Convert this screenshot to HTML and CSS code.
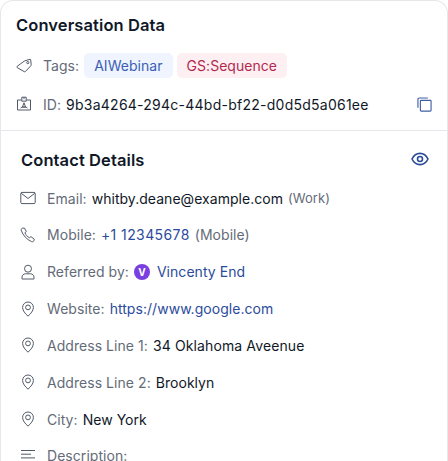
FILE: index.html
```html
<!DOCTYPE html>
<html lang="en">
<head>
<meta charset="utf-8">
<title>Conversation Data</title>
<link rel="stylesheet" href="styles.css">
</head>
<body>
<main class="panel">
  <section class="conv">
    <h2 class="conv-title">Conversation Data</h2>
    <div class="conv-row tags-row">
      <svg class="icon" viewBox="0 0 16 16"><path d="M8.700 2.900 14 1.300c.4-.1.700.2.700.5l.5 5c0 .4-.1.700-.3.900l-5.500 5.800c-.4.400-1 .4-1.400 0L1.200 9.600c-.4-.4-.4-.9 0-1.300l6.800-5c.2-.2.400-.3.700-.4Z"/><circle cx="11.800" cy="4.600" r="1.100"/></svg>
      <span class="label">Tags:</span>
      <span class="tag tag-blue">AIWebinar</span>
      <span class="tag tag-red">GS:Sequence</span>
    </div>
    <div class="conv-row id-row">
      <svg class="icon" viewBox="0 0 16 16"><path d="M5.600 4H1.500v10h13V4h-4.100"/><path d="M5.800 1.200h4.400v4H5.800zM8 1.200v2M4.700 12.300l1-1.200h4.600l1 1.200M8 6.800l1.600 4.300H6.400z"/></svg>
      <span class="label">ID:</span>
      <span class="value id-value">9b3a4264-294c-44bd-bf22-d0d5d5a061ee</span>
      <svg class="copy" viewBox="0 0 16 16"><path d="M1 11.500V2.400C1 1.600 1.600 1 2.400 1H11.500"/><rect x="3.600" y="3.600" width="11.400" height="11.400" rx=".8"/></svg>
    </div>
  </section>
  <section class="contact">
    <header class="contact-head">
      <h2 class="contact-title">Contact Details</h2>
      <svg class="eye" viewBox="0 0 18 14"><path d="M1 7c1.700-3.600 4.500-5.600 8-5.600s6.300 2 8 5.600c-1.700 3.600-4.500 5.600-8 5.600S2.700 10.600 1 7Z"/><circle cx="9" cy="7" r="2.500"/></svg>
    </header>
    <ul class="rows">
      <li class="row">
        <svg class="icon" viewBox="0 0 16 16"><rect x=".8" y="2.400" width="14.400" height="11.200" rx="1.200"/><path d="m1.200 3.200 6.800 5.300 6.800-5.300"/></svg>
        <span class="label">Email:</span><span class="value">whitby.deane@example.com</span><span class="muted">(Work)</span>
      </li>
      <li class="row">
        <svg class="icon" viewBox="0 0 16 16"><path d="M2.300 1.200 4.400 1l2 3.500-1.500 1.300c.8 2 2.400 3.800 4.500 5l1.500-1.200 3.400 2.600-.4 1.500c-.3.800-1.300 1.300-2.200 1C6.500 12.200 3 8.500 1.200 3.200c-.2-.9.300-1.700 1.100-2Z"/></svg>
        <span class="label">Mobile:</span><span class="link phone">+1 12345678</span><span class="label">(Mobile)</span>
      </li>
      <li class="row">
        <svg class="icon" viewBox="0 0 16 16"><circle cx="8" cy="4.700" r="3.500"/><path d="M2 15v-1.800c0-1.900 1.500-3.400 3.400-3.400h5.200c1.900 0 3.400 1.500 3.400 3.400V15Z"/></svg>
        <span class="label">Referred by:</span>
        <span class="avatar">V</span><span class="link">Vincenty End</span>
      </li>
      <li class="row">
        <svg class="icon" viewBox="0 0 16 16"><path d="M8 15.200c2.800-2.600 5.400-5.500 5.400-8.800a5.400 5.400 0 0 0-10.800 0c0 3.300 2.600 6.200 5.400 8.800Z"/><circle cx="8" cy="6.400" r="2.400"/></svg>
        <span class="label">Website:</span><span class="link">https://www.google.com</span>
      </li>
      <li class="row">
        <svg class="icon" viewBox="0 0 16 16"><path d="M8 15.200c2.800-2.600 5.400-5.500 5.400-8.800a5.400 5.400 0 0 0-10.800 0c0 3.300 2.600 6.200 5.400 8.800Z"/><circle cx="8" cy="6.400" r="2.400"/></svg>
        <span class="label">Address Line 1:</span><span class="value address">34 Oklahoma Aveenue</span>
      </li>
      <li class="row">
        <svg class="icon" viewBox="0 0 16 16"><path d="M8 15.200c2.800-2.600 5.400-5.500 5.400-8.800a5.400 5.400 0 0 0-10.800 0c0 3.300 2.600 6.200 5.400 8.800Z"/><circle cx="8" cy="6.400" r="2.400"/></svg>
        <span class="label">Address Line 2:</span><span class="value">Brooklyn</span>
      </li>
      <li class="row">
        <svg class="icon" viewBox="0 0 16 16"><path d="M8 15.200c2.800-2.600 5.400-5.500 5.400-8.800a5.400 5.400 0 0 0-10.800 0c0 3.300 2.600 6.200 5.400 8.800Z"/><circle cx="8" cy="6.400" r="2.400"/></svg>
        <span class="label">City:</span><span class="value">New York</span>
      </li>
      <li class="row">
        <svg class="icon" viewBox="0 0 16 16"><path d="M1 2.500h14M1 6.200h10M1 9.900h14M1 13.600h10"/></svg>
        <span class="label">Description:</span>
      </li>
    </ul>
  </section>
</main>
</body>
</html>
```

FILE: styles.css
```css
* { box-sizing: border-box; }
html, body { margin: 0; height: 100%; overflow: hidden; background: #fff; }
body { font-family: Inter, "Liberation Sans", sans-serif; font-size: 14px; color: #111827; letter-spacing: .04px; }
.panel { width: 448px; height: 480px; border: 1px solid #e5e7eb; border-bottom: 0; border-radius: 13px 13px 0 0; overflow: hidden; }
h2 { margin: 0; font-weight: 600; font-size: 16.500px; line-height: 22px; color: #101828; letter-spacing: .1px; }
.conv { height: 130px; padding: 13px 15px 0 15px; border-bottom: 1px solid #e5e7eb; }
.conv-row { display: flex; align-items: center; gap: 5px; }
.tags-row { margin-top: 17px; height: 25px; }
.id-row { margin-top: 14px; height: 24px; }
.icon { width: 16px; height: 16px; flex: none; fill: none; stroke: #525a68; stroke-width: 1; margin-right: 6px; }
.label { color: #646b78; letter-spacing: .05px; }
.value { color: #101828; }
.id-value { letter-spacing: .25px; }
.phone { letter-spacing: .4px; }
.address { letter-spacing: .12px; }
.tag { border-radius: 5px; padding: 0 10px; line-height: 25px; height: 25px; }
.tag-blue { background: #eff4ff; color: #3b5fb5; }
.tag-red { background: #fef0f2; color: #b3294f; margin-left: -1px; }
.copy { width: 15px; height: 15px; margin-left: auto; fill: none; stroke: #3e5ea8; stroke-width: 1.200; }
.contact { padding: 18px 0 0 20px; }
.contact-head { display: flex; justify-content: space-between; align-items: center; height: 22px; padding-right: 18px; }
.contact-head .eye { position: relative; top: -1px; }
.eye { width: 18px; height: 14px; fill: none; stroke: #2b4b9b; stroke-width: 1.600; }
.rows { list-style: none; margin: 15px 0 0 -1px; padding: 0; display: flex; flex-direction: column; gap: 12.850px; }
.row { display: flex; align-items: center; gap: 5px; height: 24px; white-space: nowrap; }
.link { color: #2b4b9b; }
.muted { color: #646b78; font-size: 13px; }
.avatar { width: 16px; height: 16px; border-radius: 50%; background: #7a3fe0; color: #fff; font-size: 10px; font-weight: 700; display: flex; align-items: center; justify-content: center; margin-right: 2px; }
```
